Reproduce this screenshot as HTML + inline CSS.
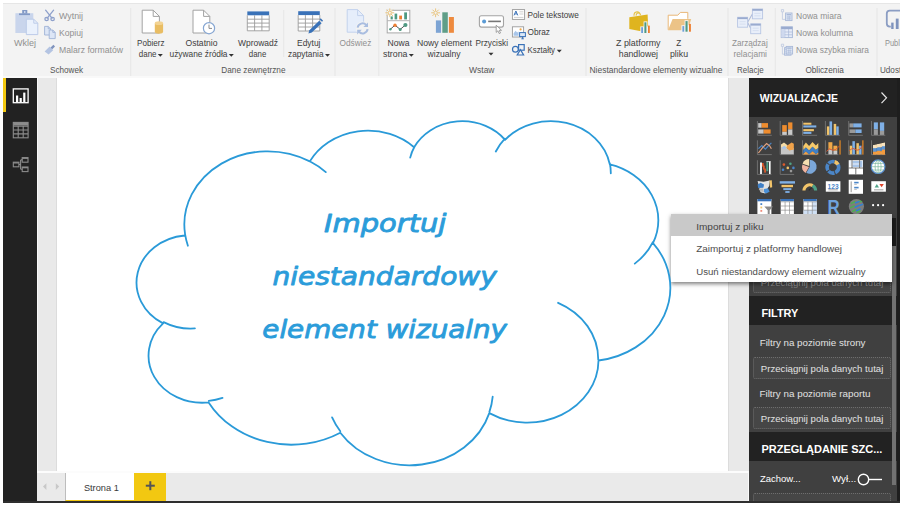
<!DOCTYPE html>
<html lang="pl"><head><meta charset="utf-8"><title>Power BI Desktop – Importuj niestandardowy element wizualny</title>
<style>
html,body{margin:0;padding:0;background:#fff;}
body{width:904px;height:505px;overflow:hidden;font-family:"Liberation Sans", sans-serif;}
#app{position:relative;width:904px;height:505px;background:#fff;overflow:hidden;}
#app>div{position:absolute;box-sizing:border-box;}
#frame{left:3px;top:3px;width:897px;height:500.6px;background:#2e2e2e;}
#ribbon{left:3px;top:3px;width:897px;height:75px;background:#f3f3f3;border-top:1px solid #e6e6e6;border-bottom:2.2px solid #f9f9f9;}
#nav{left:3px;top:78px;width:34px;height:422.6px;background:#222;}
#navsel{left:3px;top:78px;width:3px;height:34px;background:#f2c811;}
#stage{left:37px;top:78px;width:712px;height:393px;background:#e9e9e9;border-left:1.8px solid #f8f8f8;}
#page{left:56.4px;top:78px;width:672.8px;height:393px;background:#fff;border-left:1px solid #dcdcdc;border-right:1px solid #dcdcdc;}
#tabs{left:37px;top:471px;width:712px;height:29.6px;background:#eaeaea;border-top:2px solid #fcfcfc;border-right:1.5px solid #fafafa;}
#tab1{left:65px;top:473px;width:69px;height:27.5px;background:#fff;border-bottom:1.8px solid #f2c811;border-left:1px solid #bdbdbd;}
#tabadd{left:134px;top:473px;width:32.4px;height:27.5px;background:#f2c811;}
#pane{left:749px;top:78px;width:151px;height:422.6px;background:#404040;overflow:hidden;}
#pane .hd{position:absolute;left:0;width:151px;background:#222;}
#pane .well{position:absolute;left:4.4px;width:137.6px;border:1px dotted #6e6e6e;border-radius:2px;box-sizing:border-box;background:#464646;}
#menu{left:671px;top:214px;width:221px;height:67.6px;background:#fff;box-shadow:0 1.5px 4px rgba(0,0,0,.5);}
#menu .hi{position:absolute;left:0;top:0;width:221px;height:22px;background:#c9c9c9;}
#ink{position:absolute;left:0;top:0;}
#ink text{font-family:"Liberation Sans", sans-serif;white-space:pre;}
</style></head><body>
<div id="app">
<div id="frame"></div>
<div id="ribbon"></div>
<div id="nav"></div><div id="navsel"></div>
<div id="stage"></div><div id="page"></div>
<div id="tabs"></div><div id="tab1"></div><div id="tabadd"></div>
<div id="pane">
 <div class="hd" style="top:0;height:39px"></div>
 <div class="well" style="top:193px;height:22px"></div>
 <div class="hd" style="top:218px;height:29px"></div>
 <div class="well" style="top:279px;height:21.6px"></div>
 <div class="well" style="top:329.2px;height:21.6px"></div>
 <div class="hd" style="top:354.4px;height:28.6px"></div>
 <div class="well" style="top:415px;height:22px"></div>
 <div style="position:absolute;left:143px;top:139.6px;width:4px;height:30px;background:#1c1c1c"></div>
 <div style="position:absolute;left:143px;top:168.4px;width:4px;height:238.6px;background:#727272"></div>
 <div style="position:absolute;left:148.2px;top:0;width:2.8px;height:423px;background:#1e1e1e"></div>
</div>
<div id="menu"><div class="hi"></div></div>
<svg id="ink" width="904" height="505" viewBox="0 0 904 505">
<path d="M185.1 234.4A83.3 73.2 0 0 1 309.8 161.4A65.8 57.9 0 0 1 414.1 147.3A53.9 47.3 0 0 1 505.1 139.8A59.9 52.5 0 0 1 609.8 164.4A65.8 57.9 0 0 1 653.0 243.1A83.6 73.4 0 0 1 598.5 360.5A71.4 62.6 0 0 1 489.3 413.1A83.3 73.4 0 0 1 340.3 432.7A95.2 84.0 0 0 1 208.6 402.4A53.8 47.1 0 0 1 163.1 323.4A53.6 47.3 0 0 1 184.7 235.5ZM194.9 328.4A53.6 47.3 0 0 1 163.6 322.1M222.5 397.9A53.8 47.1 0 0 1 208.8 400.9M340.3 431.3A83.3 73.4 0 0 1 332.1 417.4M492.7 396.7A83.3 73.4 0 0 1 489.4 411.9M558.1 302.8A71.4 62.6 0 0 1 598.2 359.6M652.7 242.3A65.8 57.9 0 0 1 634.8 263.6M609.8 163.2A59.9 52.5 0 0 1 610.8 173.3M495.8 151.5A59.9 52.5 0 0 1 504.9 138.6M410.2 157.6A53.9 47.3 0 0 1 414.6 146.5M309.7 161.3A83.3 73.2 0 0 1 325.8 172.1M187.9 245.7A83.3 73.2 0 0 1 185.1 234.4" fill="#fff" stroke="#2a9ad8" stroke-width="1.8" stroke-linecap="round" stroke-linejoin="round"/>
<text x="323.9" y="231.6" font-size="25.2" fill="#2b9cda" textLength="122.5" lengthAdjust="spacingAndGlyphs" style='font-family:"DejaVu Sans", sans-serif' font-style="italic" stroke="#2b9cda" stroke-width=".85" stroke-linejoin="round">Importuj</text>
<text x="272.4" y="284.9" font-size="25.2" fill="#2b9cda" textLength="224.5" lengthAdjust="spacingAndGlyphs" style='font-family:"DejaVu Sans", sans-serif' font-style="italic" stroke="#2b9cda" stroke-width=".85" stroke-linejoin="round">niestandardowy</text>
<text x="262.3" y="337.7" font-size="25.2" fill="#2b9cda" textLength="244.7" lengthAdjust="spacingAndGlyphs" style='font-family:"DejaVu Sans", sans-serif' font-style="italic" stroke="#2b9cda" stroke-width=".85" stroke-linejoin="round">element wizualny</text>
<text x="14.0" y="45.9" font-size="9.3" fill="#909090" textLength="22.0" lengthAdjust="spacingAndGlyphs">Wklej</text>
<text x="59.0" y="18.7" font-size="9.3" fill="#909090" textLength="24.0" lengthAdjust="spacingAndGlyphs">Wytnij</text>
<text x="59.0" y="35.5" font-size="9.3" fill="#909090" textLength="24.0" lengthAdjust="spacingAndGlyphs">Kopiuj</text>
<text x="59.0" y="53.2" font-size="9.3" fill="#909090" textLength="64.0" lengthAdjust="spacingAndGlyphs">Malarz formatów</text>
<text x="50.0" y="73.3" font-size="9.3" fill="#555" textLength="33.0" lengthAdjust="spacingAndGlyphs">Schowek</text>
<text x="137.0" y="45.9" font-size="9.3" fill="#3d3d3d" textLength="27.5" lengthAdjust="spacingAndGlyphs">Pobierz</text>
<text x="138.8" y="57.4" font-size="9.3" fill="#3d3d3d" textLength="17.7" lengthAdjust="spacingAndGlyphs">dane</text>
<text x="185.5" y="45.9" font-size="9.3" fill="#3d3d3d" textLength="32.0" lengthAdjust="spacingAndGlyphs">Ostatnio</text>
<text x="169.5" y="57.4" font-size="9.3" fill="#3d3d3d" textLength="58.0" lengthAdjust="spacingAndGlyphs">używane źródła</text>
<text x="238.0" y="45.9" font-size="9.3" fill="#3d3d3d" textLength="40.0" lengthAdjust="spacingAndGlyphs">Wprowadź</text>
<text x="248.8" y="57.4" font-size="9.3" fill="#3d3d3d" textLength="17.5" lengthAdjust="spacingAndGlyphs">dane</text>
<text x="297.0" y="45.9" font-size="9.3" fill="#3d3d3d" textLength="23.5" lengthAdjust="spacingAndGlyphs">Edytuj</text>
<text x="288.0" y="57.4" font-size="9.3" fill="#3d3d3d" textLength="35.5" lengthAdjust="spacingAndGlyphs">zapytania</text>
<text x="221.3" y="73.3" font-size="9.3" fill="#555" textLength="64.2" lengthAdjust="spacingAndGlyphs">Dane zewnętrzne</text>
<text x="339.5" y="45.9" font-size="9.3" fill="#909090" textLength="31.8" lengthAdjust="spacingAndGlyphs">Odśwież</text>
<text x="387.5" y="45.9" font-size="9.3" fill="#3d3d3d" textLength="22.0" lengthAdjust="spacingAndGlyphs">Nowa</text>
<text x="383.0" y="57.4" font-size="9.3" fill="#3d3d3d" textLength="24.5" lengthAdjust="spacingAndGlyphs">strona</text>
<text x="417.0" y="45.9" font-size="9.3" fill="#3d3d3d" textLength="54.8" lengthAdjust="spacingAndGlyphs">Nowy element</text>
<text x="427.5" y="57.4" font-size="9.3" fill="#3d3d3d" textLength="33.0" lengthAdjust="spacingAndGlyphs">wizualny</text>
<text x="475.5" y="45.9" font-size="9.3" fill="#3d3d3d" textLength="32.5" lengthAdjust="spacingAndGlyphs">Przyciski</text>
<text x="527.5" y="18.0" font-size="9.3" fill="#3d3d3d" textLength="51.3" lengthAdjust="spacingAndGlyphs">Pole tekstowe</text>
<text x="527.5" y="35.4" font-size="9.3" fill="#3d3d3d" textLength="22.5" lengthAdjust="spacingAndGlyphs">Obraz</text>
<text x="527.5" y="53.2" font-size="9.3" fill="#3d3d3d" textLength="27.5" lengthAdjust="spacingAndGlyphs">Kształty</text>
<text x="469.0" y="73.3" font-size="9.3" fill="#555" textLength="25.5" lengthAdjust="spacingAndGlyphs">Wstaw</text>
<text x="616.0" y="45.9" font-size="9.3" fill="#3d3d3d" textLength="44.5" lengthAdjust="spacingAndGlyphs">Z platformy</text>
<text x="618.8" y="57.4" font-size="9.3" fill="#3d3d3d" textLength="39.2" lengthAdjust="spacingAndGlyphs">handlowej</text>
<text x="676.3" y="45.9" font-size="9.3" fill="#3d3d3d" textLength="5.0" lengthAdjust="spacingAndGlyphs">Z</text>
<text x="670.0" y="57.4" font-size="9.3" fill="#3d3d3d" textLength="18.0" lengthAdjust="spacingAndGlyphs">pliku</text>
<text x="589.5" y="73.3" font-size="9.3" fill="#555" textLength="133.0" lengthAdjust="spacingAndGlyphs">Niestandardowe elementy wizualne</text>
<text x="732.0" y="45.5" font-size="9.3" fill="#909090" textLength="35.7" lengthAdjust="spacingAndGlyphs">Zarządzaj</text>
<text x="733.4" y="57.0" font-size="9.3" fill="#909090" textLength="33.6" lengthAdjust="spacingAndGlyphs">relacjami</text>
<text x="737.0" y="73.3" font-size="9.3" fill="#555" textLength="26.6" lengthAdjust="spacingAndGlyphs">Relacje</text>
<text x="796.0" y="18.7" font-size="9.3" fill="#909090" textLength="45.5" lengthAdjust="spacingAndGlyphs">Nowa miara</text>
<text x="796.0" y="35.6" font-size="9.3" fill="#909090" textLength="57.0" lengthAdjust="spacingAndGlyphs">Nowa kolumna</text>
<text x="796.0" y="52.9" font-size="9.3" fill="#909090" textLength="73.0" lengthAdjust="spacingAndGlyphs">Nowa szybka miara</text>
<text x="805.4" y="73.3" font-size="9.3" fill="#555" textLength="38.4" lengthAdjust="spacingAndGlyphs">Obliczenia</text>
<path d="M157.8 54.0h5l-2.5 2.8z" fill="#333"/>
<path d="M228.8 54.0h5l-2.5 2.8z" fill="#333"/>
<path d="M325.0 54.0h5l-2.5 2.8z" fill="#333"/>
<path d="M408.8 54.0h5l-2.5 2.8z" fill="#333"/>
<path d="M488.5 52.8h5l-2.5 2.8z" fill="#333"/>
<path d="M556.8 49.8h5l-2.5 2.8z" fill="#333"/>
<rect x="130.2" y="8" width="1" height="68" fill="#e6e6e6"/>
<rect x="334.5" y="8" width="1" height="68" fill="#e6e6e6"/>
<rect x="378.3" y="8" width="1" height="68" fill="#e6e6e6"/>
<rect x="585.5" y="8" width="1" height="68" fill="#e6e6e6"/>
<rect x="727.5" y="8" width="1" height="68" fill="#e6e6e6"/>
<rect x="774.8" y="8" width="1" height="68" fill="#e6e6e6"/>
<rect x="876.5" y="8" width="1" height="68" fill="#e6e6e6"/>
<rect x="283.2" y="10" width="1" height="47" fill="#e6e6e6"/>
<text x="759.8" y="101.7" font-size="10.8" fill="#fff" textLength="78.2" lengthAdjust="spacingAndGlyphs" font-weight="bold">WIZUALIZACJE</text>
<path d="M881.5 92.5l5 5.3l-5 5.3" fill="none" stroke="#e8e8e8" stroke-width="1.2"/>
<text x="761.4" y="316.9" font-size="10.8" fill="#fff" textLength="37.0" lengthAdjust="spacingAndGlyphs" font-weight="bold">FILTRY</text>
<text x="761.4" y="453.2" font-size="10.8" fill="#fff" textLength="121.0" lengthAdjust="spacingAndGlyphs" font-weight="bold">PRZEGLĄDANIE SZC...</text>
<text x="760.8" y="286.0" font-size="9.4" fill="#7c7c7c" textLength="122.5" lengthAdjust="spacingAndGlyphs">Przeciągnij pola danych tutaj</text>
<text x="759.7" y="345.6" font-size="9.4" fill="#e2e2e2" textLength="105.8" lengthAdjust="spacingAndGlyphs">Filtry na poziomie strony</text>
<text x="760.8" y="371.6" font-size="9.4" fill="#e2e2e2" textLength="122.5" lengthAdjust="spacingAndGlyphs">Przeciągnij pola danych tutaj</text>
<text x="759.5" y="396.6" font-size="9.4" fill="#e2e2e2" textLength="110.9" lengthAdjust="spacingAndGlyphs">Filtry na poziomie raportu</text>
<text x="760.8" y="422.0" font-size="9.4" fill="#e2e2e2" textLength="122.5" lengthAdjust="spacingAndGlyphs">Przeciągnij pola danych tutaj</text>
<text x="760.0" y="482.1" font-size="9.4" fill="#fff" textLength="40.6" lengthAdjust="spacingAndGlyphs">Zachow...</text>
<text x="832.0" y="482.1" font-size="9.4" fill="#fff" textLength="24.2" lengthAdjust="spacingAndGlyphs">Wył...</text>
<circle cx="863.5" cy="479.5" r="5.2" fill="none" stroke="#fff" stroke-width="1.4"/>
<rect x="869" y="478.8" width="13" height="1.4" fill="#fff"/>
<text x="83.9" y="490.5" font-size="9.8" fill="#3a3a3a" textLength="34.9" lengthAdjust="spacingAndGlyphs">Strona 1</text>
<rect x="145.8" y="484.7" width="9" height="2" fill="#555"/>
<rect x="149.3" y="481.2" width="2" height="9" fill="#555"/>
<path d="M43 486.6l3.4-3.4v6.8z" fill="#c8c8c8"/>
<path d="M59.2 486.6l-3.4-3.4v6.8z" fill="#c8c8c8"/>
<rect x="13.3" y="88.9" width="14.8" height="13.8" fill="none" stroke="#fff" stroke-width="1.3"/>
<rect x="16" y="95.5" width="2.2" height="6.5" fill="#fff"/>
<rect x="19.6" y="98" width="2.2" height="4" fill="#fff"/>
<rect x="23.2" y="92.6" width="2.2" height="9.4" fill="#fff"/>
<g fill="none" stroke="#8c8c8c" stroke-width="1.1"><rect x="13.3" y="122.4" width="14.8" height="15.4"/><path d="M13.3 126.2h14.8M13.3 130h14.8M13.3 133.9h14.8M18.2 126.2v11.6M23.2 126.2v11.6"/></g>
<rect x="13.3" y="122.4" width="14.8" height="3.2" fill="#8c8c8c"/>
<g fill="none" stroke="#8c8c8c" stroke-width="1.1"><rect x="13.3" y="162.2" width="5.6" height="4.6"/><rect x="22.2" y="157.6" width="5.8" height="4.6"/><rect x="22.2" y="167" width="5.8" height="4.6"/><path d="M18.9 164.5h1.8M20.6 159.9v9.4M20.6 159.9h1.6M20.6 169.3h1.6"/></g>
<rect x="13.3" y="162.2" width="5.6" height="1.3" fill="#8c8c8c"/>
<rect x="22.2" y="157.6" width="5.8" height="1.3" fill="#8c8c8c"/>
<rect x="22.2" y="167" width="5.8" height="1.3" fill="#8c8c8c"/>
<rect x="15.4" y="13.2" width="17.9" height="19.8" fill="#c9d5ec"/>
<rect x="19" y="13.4" width="11" height="1.7" fill="#8299c6"/>
<rect x="22.2" y="10" width="5.1" height="3.6" fill="#8299c6"/>
<rect x="24" y="11.2" width="1.5" height="1.6" fill="#dbe4f4"/>
<path d="M26.3 19.2H33.8L37.8 23.2V34.6H26.3Z" fill="#eaf1fc" stroke="#bccbe8" stroke-width="1" stroke-linejoin="round"/>
<path d="M33.8 19.2V23.2H37.8" fill="none" stroke="#bccbe8" stroke-width="1" stroke-linejoin="round"/>
<g fill="none" stroke="#8ea0cb" stroke-width="1.3" stroke-linecap="round"><path d="M45.6 10.2L52 18.2M53.6 10.2L47.2 18.2"/><circle cx="46.6" cy="19" r="1.7"/><circle cx="52.6" cy="19" r="1.7"/></g>
<path d="M44.6 26.4H48.2L50.6 28.799999999999997V35H44.6Z" fill="#dde6f6" stroke="#9fb2d6" stroke-width="0.9" stroke-linejoin="round"/>
<path d="M48.2 26.4V28.799999999999997H50.6" fill="none" stroke="#9fb2d6" stroke-width="0.9" stroke-linejoin="round"/>
<path d="M49.2 30H52.800000000000004L55.2 32.4V38.6H49.2Z" fill="#dde6f6" stroke="#9fb2d6" stroke-width="0.9" stroke-linejoin="round"/>
<path d="M52.800000000000004 30V32.4H55.2" fill="none" stroke="#9fb2d6" stroke-width="0.9" stroke-linejoin="round"/>
<path d="M53.4 44.8l1.6 1.6l-3 3l-1.6-1.6z" fill="#7f93bd"/>
<path d="M49.6 46.6l3.6 3.6l-4.6 4.4l-4-3.2z" fill="#b4c4e2"/>
<path d="M142.2 10.2H153.20000000000002L159.4 16.4V33H142.2Z" fill="#fff" stroke="#a2a2a2" stroke-width="1" stroke-linejoin="round"/>
<path d="M153.20000000000002 10.2V16.4H159.4" fill="none" stroke="#a2a2a2" stroke-width="1" stroke-linejoin="round"/>
<path d="M154.8 23.2v8.6a4.15 1.9 0 0 0 8.3 0v-8.6z" fill="#e9bd63"/>
<ellipse cx="158.95" cy="23.2" rx="4.15" ry="1.9" fill="#f3d392"/>
<path d="M193 10.2H203.60000000000002L209.8 16.4V33H193Z" fill="#fff" stroke="#a2a2a2" stroke-width="1" stroke-linejoin="round"/>
<path d="M203.60000000000002 10.2V16.4H209.8" fill="none" stroke="#a2a2a2" stroke-width="1" stroke-linejoin="round"/>
<circle cx="209" cy="28.2" r="5.6" fill="#fff" stroke="#86a6d2" stroke-width="1.2"/>
<path d="M209 24.6v3.8h3" fill="none" stroke="#8a8a8a" stroke-width="1"/>
<rect x="247.3" y="11.4" width="21.899999999999977" height="19.4" fill="#fff"/>
<rect x="247.3" y="11.4" width="21.899999999999977" height="3.9" fill="#3a72b8"/>
<path d="M247.3 15.3V30.8H269.2V15.3M247.3 19.2H269.2M247.3 23.1H269.2M247.3 26.9H269.2M254.6 15.3V30.8M261.9 15.3V30.8" fill="none" stroke="#9c9c9c" stroke-width="0.9"/>
<rect x="298.2" y="11.2" width="21.600000000000023" height="19.8" fill="#fff"/>
<rect x="298.2" y="11.2" width="21.600000000000023" height="3.9" fill="#3a72b8"/>
<path d="M298.2 15.1V31H319.8V15.1M298.2 19.1H319.8M298.2 23.1H319.8M298.2 27.0H319.8M305.4 15.1V31M312.6 15.1V31" fill="none" stroke="#9c9c9c" stroke-width="0.9"/>
<path d="M308.4 33.6l1-3.4l9.8-9.4l2.4 2.4l-9.8 9.4z" fill="#3a72b8"/>
<path d="M319.6 19.4l1.1-1.1l2.4 2.4l-1.1 1.1z" fill="#3a72b8"/>
<path d="M347.2 9.6H357.6L363.6 15.6V32.2H347.2Z" fill="#e6eefb" stroke="#c3d2ed" stroke-width="1" stroke-linejoin="round"/>
<path d="M357.6 9.6V15.6H363.6" fill="none" stroke="#c3d2ed" stroke-width="1" stroke-linejoin="round"/>
<circle cx="362.6" cy="28.4" r="6.8" fill="#f3f3f3"/>
<g fill="none" stroke="#a9bde0" stroke-width="2"><path d="M357.6 27.6a5 5 0 0 1 8.6-2.6"/><path d="M367.6 29.2a5 5 0 0 1-8.6 2.6"/></g>
<path d="M368 22.4v4.6h-4.6z" fill="#a9bde0"/>
<path d="M357.2 34.4v-4.6h4.6z" fill="#a9bde0"/>
<rect x="387.2" y="10.3" width="22.6" height="22.6" fill="#fff" stroke="#a8a8a8" stroke-width="1"/>
<rect x="387.2" y="20.2" width="22.6" height="1" fill="#b4b4b4"/>
<rect x="390.6" y="16.4" width="2.2" height="3" fill="#4f9a82"/>
<rect x="394.6" y="13.6" width="2.6" height="5.8" fill="#4f9a82"/>
<rect x="399.2" y="15.6" width="2.8" height="3.8" fill="#ee7f31"/>
<rect x="404.2" y="12.4" width="2.8" height="7" fill="#4f9a82"/>
<path d="M390.4 29.2L395 25.2L400.2 29.4L405.4 25" fill="none" stroke="#555" stroke-width="1"/>
<circle cx="390.4" cy="29.2" r="1.2" fill="#4f9a82"/><circle cx="395" cy="25.2" r="1.7" fill="#ee7f31"/><circle cx="400.2" cy="29.4" r="1.5" fill="#4f9a82"/><circle cx="405.4" cy="25" r="2.1" fill="#4f9a82"/>
<circle cx="389.8" cy="12.8" r="3.2" fill="#f6f6f4"/>
<path d="M391.3 12.8L394.2 12.8M390.9 13.9L392.9 15.9M389.8 14.3L389.8 17.2M388.7 13.9L386.7 15.9M388.3 12.8L385.4 12.8M388.7 11.7L386.7 9.7M389.8 11.3L389.8 8.4M390.9 11.7L392.9 9.7" fill="none" stroke="#e9c580" stroke-width="1"/>
<circle cx="389.8" cy="12.8" r="1.6" fill="#f3f3f3" stroke="#e9c580" stroke-width=".9"/>
<rect x="435.9" y="20.4" width="5.2" height="12.4" fill="#7da4d4"/>
<rect x="442.3" y="12.3" width="5.5" height="20.5" fill="#5f9e88"/>
<rect x="448.9" y="17" width="5" height="15.8" fill="#ee8a3e"/>
<path d="M437.1 12.8L440.0 12.8M436.7 13.9L438.7 15.9M435.6 14.3L435.6 17.2M434.5 13.9L432.5 15.9M434.1 12.8L431.2 12.8M434.5 11.7L432.5 9.7M435.6 11.3L435.6 8.4M436.7 11.7L438.7 9.7" fill="none" stroke="#e9c580" stroke-width="1"/>
<circle cx="435.6" cy="12.8" r="1.6" fill="#f3f3f3" stroke="#e9c580" stroke-width=".9"/>
<rect x="479.4" y="15.7" width="24.1" height="11.4" rx="2" fill="#fff" stroke="#a4a4a4" stroke-width="1.1"/>
<circle cx="484.1" cy="21.4" r="2" fill="#5b9bd5"/>
<rect x="488.2" y="20.6" width="12.7" height="1.6" fill="#777"/>
<path d="M496.2 25.2v7.2l1.7-1.6l1.3 2.8l1.3-.6l-1.3-2.7h2.3z" fill="#fff" stroke="#8c8c8c" stroke-width="0.8"/>
<path d="M634 15.8a3.2 3.6 0 0 1 6.4-.6M636.2 15.6a2.2 2.4 0 0 1 4.4-.4" fill="none" stroke="#e6c248" stroke-width="1.1"/>
<path d="M629.3 17.3L647.6 14.5L648.2 27.6L641 31.2L629.3 28.9Z" fill="#dfb41f"/>
<rect x="640.3" y="26.4" width="10.4" height="7.4" fill="#f3f3f3"/>
<rect x="643.6" y="21.4" width="3.8" height="6" fill="#f3f3f3"/>
<rect x="641.2" y="27.2" width="1.8" height="5.8" fill="#6f9fd8"/>
<rect x="644.4" y="22.3" width="2" height="10.7" fill="#4f9a82"/>
<rect x="648" y="25.6" width="1.8" height="7.4" fill="#ee7f31"/>
<path d="M668.2 29.8V15.2h9.6l2.6-2.8h7.4v6.4" fill="#fff" stroke="#e9b777" stroke-width="1"/>
<path d="M672.6 18.9H691.2L687.9 30.2H668Z" fill="#ecc387"/>
<rect x="681.4" y="25.2" width="10.4" height="7" fill="#f3f3f3"/>
<rect x="684.6" y="20.2" width="3.8" height="6" fill="#f3f3f3"/>
<rect x="682.4" y="26.1" width="1.8" height="5.6" fill="#6f9fd8"/>
<rect x="685.5" y="21.1" width="2.1" height="10.6" fill="#4f9a82"/>
<rect x="689" y="23.9" width="1.9" height="7.8" fill="#ee7f31"/>
<path d="M747.6 22.2L752.4 14M747.6 22.4L750.8 28.6" fill="none" stroke="#aebcdb" stroke-width="1.1"/>
<rect x="737.6" y="17.3" width="10.0" height="9.9" fill="#e9effa" stroke="#b8c6e3" stroke-width=".9"/>
<rect x="737.6" y="17.3" width="10.0" height="1.8" fill="#9aabcf"/>
<path d="M739.6 21.700000000000003h6.0M739.6 24.1h6.0" fill="none" stroke="#d0daee" stroke-width="0.8"/>
<rect x="752.4" y="9" width="10.2" height="9.8" fill="#e9effa" stroke="#b8c6e3" stroke-width=".9"/>
<rect x="752.4" y="9" width="10.200000000000045" height="1.8" fill="#9aabcf"/>
<path d="M754.4 13.4h6.2000000000000455M754.4 15.8h6.2000000000000455" fill="none" stroke="#d0daee" stroke-width="0.8"/>
<rect x="750.7" y="23.8" width="10.0" height="9.9" fill="#e9effa" stroke="#b8c6e3" stroke-width=".9"/>
<rect x="750.7" y="23.8" width="10.0" height="1.8" fill="#9aabcf"/>
<path d="M752.7 28.200000000000003h6.0M752.7 30.6h6.0" fill="none" stroke="#d0daee" stroke-width="0.8"/>
<path d="M900 10.6h-10.2a3 3 0 0 0-3 3v10a3 3 0 0 0 3 3h1" fill="none" stroke="#8b9dc3" stroke-width="1.8"/>
<rect x="891.2" y="22.6" width="2.4" height="6.4" fill="#7f93bd"/>
<rect x="895.8" y="18.6" width="2.8" height="10.4" fill="#7f93bd"/>
<text x="885.0" y="45.9" font-size="9.3" fill="#909090" textLength="14.9" lengthAdjust="spacingAndGlyphs">Publ</text>
<text x="880.0" y="73.3" font-size="9.3" fill="#555" textLength="21.2" lengthAdjust="spacingAndGlyphs">Udost</text>
<rect x="512.4" y="9.6" width="12.2" height="9.8" fill="#fff" stroke="#9a9a9a" stroke-width=".9"/>
<path d="M514 15.4l1.9-4.4l1.9 4.4M514.8 13.9h2.2" fill="none" stroke="#3a72b8" stroke-width="1"/>
<path d="M519.4 11.8h4M519.4 14h4M514 17.4h9.4" fill="none" stroke="#c4c4c4" stroke-width="0.8"/>
<rect x="512.4" y="26.8" width="11.2" height="10.2" fill="#fff" stroke="#9a9a9a" stroke-width=".9"/>
<path d="M513.6 35.8v-2.6l2-2.4l1.6 1.8l1.4-1v4.2z" fill="#a9c6ea"/>
<circle cx="520.6" cy="29.4" r="1.1" fill="#f0a848"/>
<rect x="519.6" y="32.6" width="5.8" height="4" fill="#dce9f8" stroke="#3a72b8" stroke-width="1"/>
<path d="M521.4 38.8h2.4M522.6 36.8v2" fill="none" stroke="#3a72b8" stroke-width="1"/>
<g fill="#f3f3f3" stroke="#3a72b8" stroke-width="1.2"><circle cx="515.4" cy="49.2" r="2.9"/><rect x="518.6" y="44.6" width="5.6" height="5.6"/><path d="M520.4 49.6l3.2 5.4h-6.4z"/></g>
<path d="M781.4 9.6h2.2v2.2h-2.2zM782.4 12v7.4h3" fill="none" stroke="#bcc8e0" stroke-width="0.8"/>
<rect x="785.6" y="13" width="6.4" height="7.6" fill="#dfe7f5" stroke="#a9b9d8" stroke-width=".9"/>
<rect x="786.6" y="14" width="4.4" height="1.4" fill="#a9b9d8"/>
<path d="M786.6 17h4.4M786.6 18.8h4.4M788.0 16v4M789.6 16v4" fill="none" stroke="#a9b9d8" stroke-width="0.6"/>
<rect x="781.2" y="26.8" width="11.2" height="10.8" fill="#e6ecf8" stroke="#a9b9d8" stroke-width=".9"/>
<rect x="781.2" y="26.8" width="11.2" height="2.4" fill="#9aabcf"/>
<path d="M781.2 32h11.2M781.2 34.8h11.2M784.8 29v8.6M788.6 29v8.6" fill="none" stroke="#a9b9d8" stroke-width="0.7"/>
<rect x="781.4" y="29.2" width="3.2" height="8.2" fill="#cfd9ee"/>
<path d="M781.4 44.2h2.2v2.2h-2.2zM782.4 46.6v7.6h2.2" fill="none" stroke="#bcc8e0" stroke-width="0.8"/>
<rect x="784.6" y="47.6" width="6.4" height="7.6" fill="#dfe7f5" stroke="#a9b9d8" stroke-width=".9"/>
<rect x="785.6" y="48.6" width="4.4" height="1.4" fill="#a9b9d8"/>
<path d="M785.6 51.6h4.4M785.6 53.4h4.4M787.0 50.6v4M788.6 50.6v4" fill="none" stroke="#a9b9d8" stroke-width="0.6"/>
<rect x="786.2" y="46.4" width="6.4" height="7.6" fill="#dfe7f5" stroke="#a9b9d8" stroke-width=".9"/>
<rect x="787.2" y="47.4" width="4.4" height="1.4" fill="#a9b9d8"/>
<path d="M787.2 50.4h4.4M787.2 52.199999999999996h4.4M788.6 49.4v4M790.2 49.4v4" fill="none" stroke="#a9b9d8" stroke-width="0.6"/>
<path d="M757.4 121V135.3H771.8" fill="none" stroke="#747474" stroke-width="0.9"/>
<rect x="758.1999999999999" y="123.1" width="3.5" height="4.6" fill="#c9c9c9"/>
<rect x="761.6999999999999" y="123.1" width="6.3" height="4.6" fill="#ee8c2e"/>
<rect x="758.1999999999999" y="129.4" width="5.5" height="4.2" fill="#c9c9c9"/>
<rect x="763.6999999999999" y="129.4" width="6.9" height="4.2" fill="#ee8c2e"/>
<path d="M780.2 121V135.3H794.0" fill="none" stroke="#747474" stroke-width="0.9"/>
<rect x="782.2" y="125.1" width="4.6" height="6.7" fill="#ee8c2e"/>
<rect x="782.2" y="131.8" width="4.6" height="3.1" fill="#c9c9c9"/>
<rect x="788.1" y="122.4" width="4.3" height="7" fill="#ee8c2e"/>
<rect x="788.1" y="129.4" width="4.3" height="5.5" fill="#c9c9c9"/>
<path d="M802.5 121V135.3H817.1" fill="none" stroke="#747474" stroke-width="0.9"/>
<rect x="803.3" y="122.7" width="8.1" height="2" fill="#f2c46a"/>
<rect x="803.3" y="125.4" width="13" height="2.1" fill="#7fb0e6"/>
<rect x="803.3" y="129.1" width="10.6" height="2.1" fill="#f2c46a"/>
<rect x="803.3" y="131.8" width="8.1" height="2.1" fill="#7fb0e6"/>
<path d="M825.4 121V135.3H839.8" fill="none" stroke="#747474" stroke-width="0.9"/>
<rect x="826.9" y="126.4" width="2.5" height="8.5" fill="#f2c46a"/>
<rect x="829.5" y="121.4" width="2.6" height="13.5" fill="#7fb0e6"/>
<rect x="833.6999999999999" y="123.9" width="2.5" height="11" fill="#f2c46a"/>
<rect x="836.3" y="126.4" width="2.4" height="8.5" fill="#7fb0e6"/>
<path d="M848.7 121V135.3H862.9000000000001" fill="none" stroke="#747474" stroke-width="0.9"/>
<rect x="849.5" y="123.4" width="3.7" height="4" fill="#9a9a9a"/>
<rect x="853.2" y="123.4" width="8.4" height="4" fill="#7fb0e6"/>
<rect x="849.5" y="129.4" width="5.9" height="3.6" fill="#9a9a9a"/>
<rect x="855.4000000000001" y="129.4" width="6.2" height="3.6" fill="#7fb0e6"/>
<path d="M871.5 121V135.3H885.3" fill="none" stroke="#747474" stroke-width="0.9"/>
<rect x="873.8" y="122.4" width="4.1" height="7" fill="#7fb0e6"/>
<rect x="873.8" y="129.4" width="4.1" height="5.5" fill="#9a9a9a"/>
<rect x="879.9" y="122.4" width="4.3" height="8.5" fill="#7fb0e6"/>
<rect x="879.9" y="130.9" width="4.3" height="4" fill="#9a9a9a"/>
<path d="M757.4 140.3V154.6H771.8" fill="none" stroke="#747474" stroke-width="0.9"/>
<path d="M758.4 148.6l3.4-3l3.6 3.6l3.4-3.8l2.6-2.6" fill="none" stroke="#4b86c8" stroke-width="1.2"/>
<path d="M758.4 153l4.2-5.4l4-4l3 2.2l1.8 3" fill="none" stroke="#e3a27e" stroke-width="1.2"/>
<path d="M780.2 140.3V154.6H794.0" fill="none" stroke="#747474" stroke-width="0.9"/>
<path d="M781.0 154.2v-7l3.2-1.6l4 3.4l5.6-1v6.2z" fill="#c6c6c6"/>
<path d="M781.0 147.2v-2.8l3-1.8l3.6 2.6l-1.2 3.6l-2.4-.8z" fill="#f6dca6"/>
<path d="M781.8000000000001 147.4l2.4-1.6l2.4 1.6l-1 1.6h-2.8z" fill="#a9c6ea"/>
<path d="M787.6 145.2l4-2.8l2.2 1.4v5.6l-4.6 1.2l-2.8-3z" fill="#f0a24a"/>
<path d="M802.5 140.3V154.6H817.1" fill="none" stroke="#747474" stroke-width="0.9"/>
<path d="M803.3 146l2.6-3.4l3.2 3.4l3.4-4l3.4 3.4l2.4-2.4v5l-2.4 2l-3.4-3.2l-3.4 3.8l-3.2-3.2l-2.6 2.6z" fill="#f5c86a"/>
<path d="M803.3 150l2.6-2.6l3.2 3.2l3.4-3.8l3.4 3.2l2.4-2v4.4l-2.4 1.8l-3.4-3l-3.4 3.4l-3.2-3l-2.6 2.4z" fill="#3f7fc6"/>
<path d="M803.3 154.6v-.6l2.6-2.4l3.2 3l3.4-3.4l3.4 3l2.4-1.8v2.2z" fill="#f0a24a"/>
<path d="M825.4 140.3V154.6H838.4" fill="none" stroke="#747474" stroke-width="0.9"/>
<rect x="828.4" y="142.2" width="4" height="7.5" fill="#f0a848"/>
<rect x="828.4" y="149.7" width="4" height="4.6" fill="#c9c9c9"/>
<rect x="833.4" y="145.7" width="3.9" height="5" fill="#f0a848"/>
<rect x="833.4" y="150.7" width="3.9" height="3.6" fill="#c9c9c9"/>
<rect x="839.3" y="140.3" width="1.5" height="14.3" fill="#c87d2a"/>
<path d="M826.4 151.4l3-2.6l3 1.4l3.4-.6l3.6-3.6" fill="none" stroke="#e0562b" stroke-width="0.9"/>
<path d="M848.7 140.3V154.6H861.7" fill="none" stroke="#747474" stroke-width="0.9"/>
<rect x="849.7" y="145.7" width="2.5" height="8.6" fill="#f2c46a"/>
<rect x="852.4000000000001" y="141.2" width="2.5" height="13.1" fill="#7fb0e6"/>
<rect x="856.4000000000001" y="143.2" width="2.5" height="11.1" fill="#f2c46a"/>
<rect x="859.1" y="145.7" width="2.4" height="8.6" fill="#7fb0e6"/>
<rect x="862.1" y="140.3" width="1.5" height="14.3" fill="#c87d2a"/>
<path d="M849.3000000000001 150.6l3.4-2.4l4 2l2.8-.6l3-3.6" fill="none" stroke="#e0562b" stroke-width="0.9"/>
<path d="M871.5 140.3V154.6H885.5" fill="none" stroke="#747474" stroke-width="0.9"/>
<path d="M873.0 145.2l12-2.6v4.4l-12 1.4z" fill="#f5dcae"/>
<path d="M873.0 148.4l12-1.4v4l-12 .6z" fill="#4b86c8"/>
<path d="M873.0 151.6l12-.6v3.4h-12z" fill="#f0a24a"/>
<rect x="873.0" y="145.2" width="3.1" height="3.2" fill="#f8e4c0"/>
<rect x="873.0" y="148.39999999999998" width="3.1" height="3.4" fill="#5b94d4"/>
<rect x="873.0" y="151.79999999999998" width="3.1" height="2.6000000000000174" fill="#f29a3e"/>
<rect x="877.2" y="144.2" width="3.1" height="3.2" fill="#f8e4c0"/>
<rect x="877.2" y="147.39999999999998" width="3.1" height="3.4" fill="#5b94d4"/>
<rect x="877.2" y="150.79999999999998" width="3.1" height="3.6000000000000174" fill="#f29a3e"/>
<rect x="881.9" y="143" width="3.1" height="3.2" fill="#f8e4c0"/>
<rect x="881.9" y="146.2" width="3.1" height="3.4" fill="#5b94d4"/>
<rect x="881.9" y="149.6" width="3.1" height="4.800000000000006" fill="#f29a3e"/>
<path d="M757.4 160.2V174.4H771.4" fill="none" stroke="#747474" stroke-width="0.9"/>
<rect x="760.1" y="162.5" width="1.8" height="11.5" fill="#fff"/>
<rect x="762.0" y="163" width="1.7" height="3.6" fill="#e05a2b"/>
<rect x="763.0" y="165.6" width="1.7" height="4" fill="#e05a2b"/>
<rect x="764.1999999999999" y="168.6" width="1.7" height="4" fill="#e05a2b"/>
<rect x="766.4" y="161.4" width="1.8" height="9.8" fill="#4fa287"/>
<rect x="769.0" y="161.4" width="1.6" height="12.6" fill="#fff"/>
<rect x="766.4" y="161.2" width="4.2" height="0.9" fill="#ddd"/>
<path d="M780.2 160.2V174.4H794.2" fill="none" stroke="#747474" stroke-width="0.9"/>
<circle cx="783.9" cy="164.6" r="1.3" fill="#e05a2b"/>
<circle cx="790.4" cy="163.7" r="1.3" fill="#4fa287"/>
<circle cx="787.8" cy="167.9" r="1.3" fill="#f2c46a"/>
<circle cx="783" cy="169.7" r="1.3" fill="#4b86c8"/>
<circle cx="793.4" cy="167.9" r="1.3" fill="#4b86c8"/>
<circle cx="791" cy="171.1" r="1.3" fill="#999"/>
<path d="M809.8 166.7V159.7A7 7 0 1 1 806.3 172.8Z" fill="#7ba7d9"/>
<path d="M809.0 166.89999999999998L805.5 173.0A7 7 0 0 1 802.4 164.5Z" fill="#f0b3a0"/>
<path d="M809.1999999999999 166.1L802.6 163.7A7 7 0 0 1 809.1999999999999 159.1Z" fill="#f5deb0"/>
<circle cx="832.9" cy="167.3" r="5.8" fill="none" stroke="#4b86c8" stroke-width="3.6" stroke-dasharray="6.4 .9"/>
<path d="M835.1 160.10000000000002A7.6 7.6 0 0 1 839.5 163.70000000000002L836.5 165.3A4 4 0 0 0 834.1 163.5Z" fill="#f2c46a"/>
<rect x="848.7" y="160.2" width="14.3" height="14.2" fill="#fff"/>
<rect x="849.6" y="161" width="2" height="5" fill="#e8f0fa"/>
<rect x="852.6" y="161" width="6.6" height="2.6" fill="#a9c6ea"/>
<rect x="852.6" y="164.4" width="6.6" height="2.6" fill="#a9c6ea"/>
<rect x="860" y="161" width="2.4" height="6" fill="#a9c6ea"/>
<path d="M848.7 168h14.3M855.8 168v6.4M852 160.2v7.8M859.6 160.2v7.8" fill="none" stroke="#3d3d3d" stroke-width="0.7"/>
<circle cx="878.1" cy="166.7" r="6.8" fill="#fff" stroke="#5b8fce" stroke-width="1.2"/>
<g fill="none" stroke="#7ab79c" stroke-width=".7"><ellipse cx="878.1" cy="166.7" rx="3" ry="6.4"/><path d="M878.1 160.4v12.6M871.8 166.7h12.6M873 163.4h10.2M873 170h10.2"/></g>
<path d="M757.6 181l6 .8l6.2-1.2l-.6 5.4l-1.8 2.4l1 3l-3.4 2l-4.4-1.2l-1.4-4.4z" fill="#e4e4e4"/>
<path d="M757.6 184.6l3-1.8l3.4 1.6l-.6 3.4l-5.2.2z" fill="#3f7fc6"/>
<path d="M764 189l4-.8l1.6 3.6l-3.6 1.6l-2.2-1.4z" fill="#4b90d6"/>
<path d="M769.4 180.6l2.4-.4l.4 7l-2 .6l-.4-3z" fill="#f2c46a"/>
<path d="M758.6 188.8l4.6-.4l.6 3.6l-3.4-.4z" fill="#bbb"/>
<rect x="779.7" y="181.2" width="15.3" height="2.4" fill="#7fb0e6"/>
<rect x="781.5" y="184.9" width="11.5" height="2.3" fill="#f2c46a"/>
<rect x="783.3" y="188.1" width="8.1" height="2" fill="#7fb0e6"/>
<rect x="785.3" y="191.1" width="4.3" height="1.8" fill="#7fb0e6"/>
<path d="M802.4 190.6A7.4 7.4 0 0 1 813.5 184.2L811.9 186.9A4.3 4.3 0 0 0 805.5 190.6Z" fill="#f2c46a"/>
<path d="M813.5 184.2A7.4 7.4 0 0 1 817.1999999999999 190.6H814.0999999999999A4.3 4.3 0 0 0 811.9 186.9Z" fill="#4fa287"/>
<path d="M808.8 190.2l3-2.6" fill="none" stroke="#2c2c2c" stroke-width="1.2"/>
<rect x="825.8" y="181.2" width="14.6" height="10.5" fill="#fff"/>
<text x="827.6" y="188.8" font-size="7" fill="#4b86c8" textLength="11.0" lengthAdjust="spacingAndGlyphs" font-weight="bold">123</text>
<rect x="828.4" y="189.4" width="9.4" height="0.9" fill="#999"/>
<rect x="848.7" y="179.8" width="14.3" height="14" fill="#fff"/>
<rect x="850.6" y="181.4" width="1.2" height="10.8" fill="#aaa"/>
<rect x="854.2" y="181.8" width="4.4" height="1.6" fill="#4b86c8"/>
<rect x="854.2" y="184.2" width="2.6" height="0.8" fill="#bbb"/>
<rect x="854.2" y="186.8" width="4.4" height="1.6" fill="#4b86c8"/>
<rect x="854.2" y="189.2" width="2.6" height="0.8" fill="#bbb"/>
<rect x="871.3" y="181.2" width="14.6" height="10.5" fill="#fff"/>
<path d="M874.6 187.4l2.2-3.4l2.2 3.4z" fill="#4fa287"/>
<path d="M879.4 184l2.2 3.2l2.2-3.2z" fill="#e0442b"/>
<rect x="874" y="189.4" width="9.4" height="0.9" fill="#999"/>
<rect x="757.4" y="199" width="14" height="15" fill="#fff"/>
<rect x="757.4" y="199" width="14" height="2.3" fill="#3a72b8"/>
<rect x="760.4" y="203.2" width="1.8" height="1.8" fill="#4b86c8"/>
<rect x="760.4" y="206.6" width="1.8" height="1.8" fill="#f2c46a"/>
<rect x="760.4" y="210" width="1.8" height="1.8" fill="#ee8a7a"/>
<path d="M764.3 206.6h8.8l-3.4 3.6v3.8h-2v-3.8z" fill="#8a8a8a"/>
<rect x="780.7" y="199" width="13.2" height="15" fill="#fff"/>
<rect x="780.7" y="199" width="13.2" height="2.2" fill="#3a72b8"/>
<path d="M780.7 201.8h13.2M780.7 206h13.2M780.7 210.2h13.2M785.1 201.8v12.2M789.5 201.8v12.2" fill="none" stroke="#7f7f7f" stroke-width="0.6"/>
<rect x="803.5" y="199" width="13.2" height="15" fill="#fff"/>
<rect x="803.5" y="199" width="13.2" height="2.2" fill="#3a72b8"/>
<rect x="812.3" y="201.8" width="4.4" height="4.2" fill="#cfe0f5"/>
<rect x="812.3" y="206.0" width="4.4" height="4.2" fill="#cfe0f5"/>
<rect x="803.5" y="210.20000000000002" width="4.4" height="4.2" fill="#cfe0f5"/>
<rect x="807.9" y="210.20000000000002" width="4.4" height="4.2" fill="#cfe0f5"/>
<rect x="812.3" y="210.20000000000002" width="4.4" height="4.2" fill="#cfe0f5"/>
<path d="M803.5 201.8h13.2M803.5 206h13.2M803.5 210.2h13.2M807.9 201.8v12.2M812.3 201.8v12.2" fill="none" stroke="#7f7f7f" stroke-width="0.6"/>
<text x="827.4" y="214.4" font-size="19.5" fill="#6fa3dc" textLength="12.2" lengthAdjust="spacingAndGlyphs" font-weight="bold">R</text>
<circle cx="856.4" cy="206.6" r="7.6" fill="#7d7d7d"/>
<g stroke-linecap="round" stroke-width="1.5"><path d="M851.4 203.4l3.4-1.6M850.6 207.6l3.6-1.6M852.6 211.4l3.4-1.6M858.6 201.2l2.6.4M857 212.4l3-1.4" stroke="#4caf50"/><path d="M855.6 202.8l3.4-1.2M855.2 207l4-1.6M856.6 210.6l3.6-1.6M860.4 205.2l2-.8" stroke="#2f7fd6"/></g>
<circle cx="873.1" cy="205.2" r="1.1" fill="#fff"/>
<circle cx="878.1" cy="205.2" r="1.1" fill="#fff"/>
<circle cx="883.1" cy="205.2" r="1.1" fill="#fff"/>
<rect x="671" y="214" width="221" height="67.6" fill="#fff"/>
<rect x="671" y="214" width="221" height="22" fill="#c9c9c9"/>
<text x="696.2" y="230.1" font-size="9.6" fill="#444" textLength="67.5" lengthAdjust="spacingAndGlyphs">Importuj z pliku</text>
<text x="696.2" y="252.4" font-size="9.6" fill="#4d4d4d" textLength="145.8" lengthAdjust="spacingAndGlyphs">Zaimportuj z platformy handlowej</text>
<text x="696.2" y="275.0" font-size="9.6" fill="#4d4d4d" textLength="169.5" lengthAdjust="spacingAndGlyphs">Usuń niestandardowy element wizualny</text>
<rect x="900" y="0" width="4" height="505" fill="#fff"/>
<rect x="0" y="503" width="904" height="2" fill="#fff"/>
</svg>
</div>
</body></html>
